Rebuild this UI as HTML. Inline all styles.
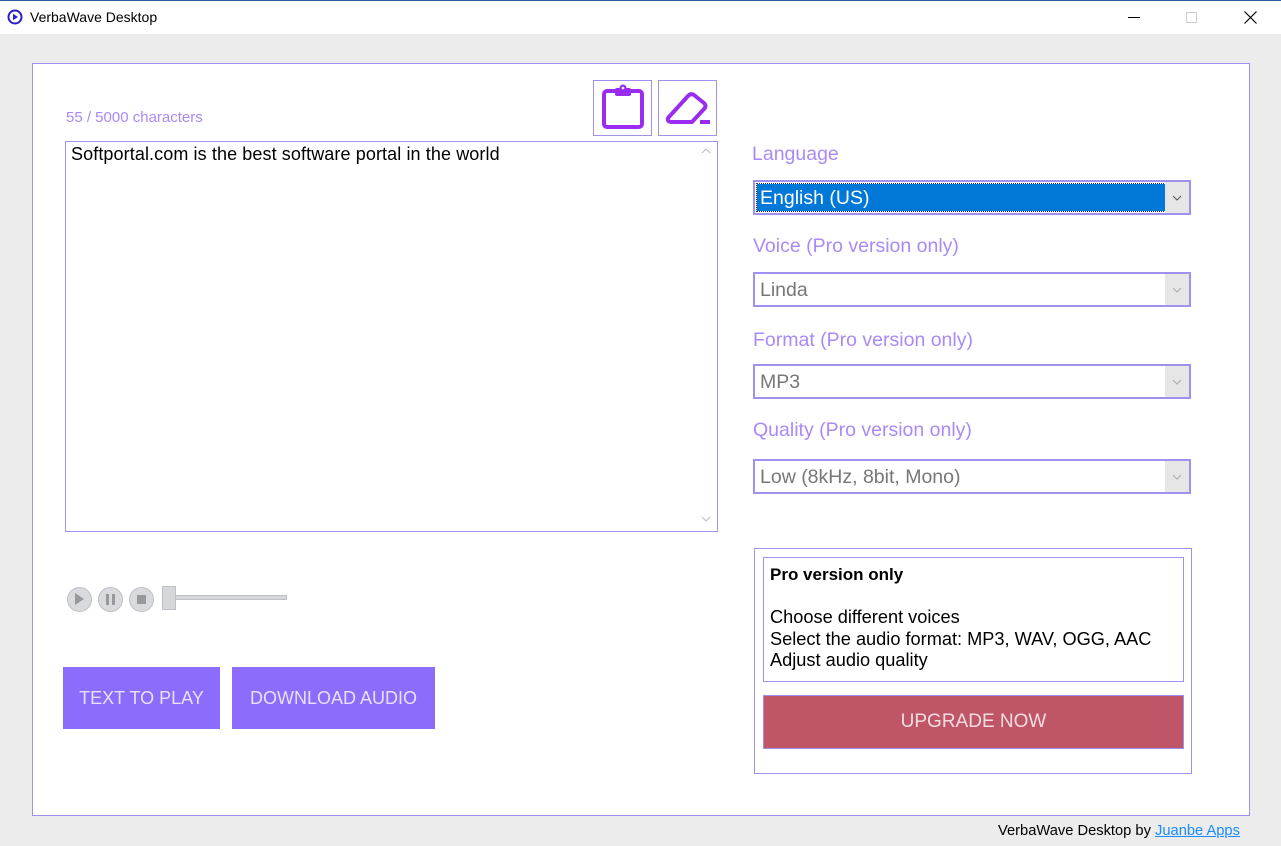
<!DOCTYPE html>
<html><head><style>
*{margin:0;padding:0;box-sizing:border-box}
body{width:1281px;height:846px;background:#ececec;font-family:"Liberation Sans",sans-serif;position:relative;overflow:hidden}
.a{position:absolute}
.lbl{color:#a98af6;font-size:19.5px}
.sel{position:absolute;left:753px;width:438px;height:35px;border:2px solid #a090f0;background:#fff;font-size:19.5px}
.sel .t{position:absolute;left:5px;top:5px;color:#777}
.sel .dd{position:absolute;right:0;top:0;width:24px;height:31px;background:#e6e6e6}
.btn{position:absolute;background:#8b6cfb;color:#e8e0ff;font-size:18px;text-align:center;line-height:62px;top:667px;height:62px}
.circ{position:absolute;top:587px;width:25px;height:25px;border-radius:50%;background:#d9dadd;border:1px solid #bfc1c5}
</style></head><body>
<div class="a" style="left:0;top:0;width:1281px;height:34px;background:#fff;border-top:1px solid #2b5aa0"></div>
<svg class="a" style="left:7px;top:9px" width="16" height="16"><circle cx="8" cy="8" r="6.5" fill="none" stroke="#2a1fd0" stroke-width="2"/><path d="M6 4.8 L11 8 L6 11.2Z" fill="#2a1fd0"/></svg>
<div class="a" style="left:30px;top:9px;font-size:14px;color:#000">VerbaWave Desktop</div>
<div class="a" style="left:1128px;top:17px;width:12px;height:1px;background:#000"></div>
<div class="a" style="left:1186px;top:12px;width:11px;height:11px;border:1px solid #ccc"></div>
<svg class="a" style="left:1244px;top:11px" width="13" height="13"><path d="M0.5 0.5L12.5 12.5M12.5 0.5L0.5 12.5" stroke="#000" stroke-width="1.2"/></svg>
<div class="a" style="left:32px;top:63px;width:1218px;height:753px;background:#fff;border:1px solid #a090f0"></div>
<div class="a" style="left:66px;top:109px;font-size:15px;color:#a98af6">55 / 5000 characters</div>
<div class="a" style="left:593px;top:80px;width:59px;height:56px;border:1px solid #a090f0"></div>
<svg class="a" style="left:593px;top:80px" width="59" height="56"><rect x="11" y="11" width="38" height="36" rx="3" fill="none" stroke="#9a2cf0" stroke-width="4"/><rect x="22" y="8" width="16" height="8" rx="2" fill="#9a2cf0"/><circle cx="30" cy="8" r="3.5" fill="#9a2cf0"/><circle cx="30" cy="8" r="1.3" fill="#fff"/></svg>
<div class="a" style="left:658px;top:80px;width:59px;height:56px;border:1px solid #a090f0"></div>
<svg class="a" style="left:658px;top:80px" width="59" height="56"><path d="M10 38 L30 16 Q33 13 36 15 L46 23 Q49 26 46 29 L34 42 L14 42 Q9 42 10 38Z" fill="none" stroke="#9a2cf0" stroke-width="4" stroke-linejoin="round"/><path d="M42 42 L52 42" stroke="#9a2cf0" stroke-width="4"/></svg>
<div class="a" style="left:65px;top:141px;width:653px;height:391px;border:1px solid #a090f0;background:#fff"></div>
<div class="a" style="left:71px;top:144px;font-size:18px;color:#000;letter-spacing:0.1px">Softportal.com is the best software portal in the world</div>
<svg class="a" style="left:701px;top:148px" width="10" height="6"><path d="M1 5L5 1L9 5" fill="none" stroke="#bbb"/></svg>
<svg class="a" style="left:701px;top:516px" width="10" height="6"><path d="M1 1L5 5L9 1" fill="none" stroke="#bbb"/></svg>
<div class="circ" style="left:67px"></div><div class="a" style="left:75px;top:593px;width:0;height:0;border-left:9px solid #999;border-top:6px solid transparent;border-bottom:6px solid transparent"></div>
<div class="circ" style="left:98px"></div><div class="a" style="left:106px;top:594px;width:3px;height:11px;background:#999"></div><div class="a" style="left:112px;top:594px;width:3px;height:11px;background:#999"></div>
<div class="circ" style="left:129px"></div><div class="a" style="left:137px;top:595px;width:9px;height:9px;background:#999"></div>
<div class="a" style="left:170px;top:595px;width:117px;height:5px;background:#d6d7da;border:1px solid #bfc1c5"></div>
<div class="a" style="left:162px;top:586px;width:14px;height:24px;background:#d6d7da;border:1px solid #bfc1c5"></div>
<div class="btn" style="left:63px;width:157px">TEXT TO PLAY</div>
<div class="btn" style="left:232px;width:203px">DOWNLOAD AUDIO</div>
<div class="a lbl" style="left:752px;top:143px">Language</div>
<div class="sel" style="top:180px"><div class="a" style="left:2px;top:2px;width:408px;height:27px;background:#0078d7;outline:1px dotted #333"></div><div class="t" style="color:#fff;top:5px">English (US)</div><div class="dd"><svg width="24" height="31"><path d="M8 14L12 18L16 14" fill="none" stroke="#555"/></svg></div></div>
<div class="a lbl" style="left:753px;top:235px">Voice (Pro version only)</div>
<div class="sel" style="top:272px"><div class="t">Linda</div><div class="dd"><svg width="24" height="31"><path d="M8 14L12 18L16 14" fill="none" stroke="#aaa"/></svg></div></div>
<div class="a lbl" style="left:753px;top:329px">Format (Pro version only)</div>
<div class="sel" style="top:364px"><div class="t">MP3</div><div class="dd"><svg width="24" height="31"><path d="M8 14L12 18L16 14" fill="none" stroke="#aaa"/></svg></div></div>
<div class="a lbl" style="left:753px;top:419px">Quality (Pro version only)</div>
<div class="sel" style="top:459px"><div class="t">Low (8kHz, 8bit, Mono)</div><div class="dd"><svg width="24" height="31"><path d="M8 14L12 18L16 14" fill="none" stroke="#aaa"/></svg></div></div>
<div class="a" style="left:754px;top:548px;width:438px;height:226px;border:1px solid #a090f0"></div>
<div class="a" style="left:763px;top:557px;width:421px;height:125px;border:1px solid #a090f0;font-size:18.2px;color:#000;padding:6px 0 0 6px;line-height:21.5px"><b style="font-size:17px">Pro version only</b><br><br>Choose different voices<br>Select the audio format: MP3, WAV, OGG, AAC<br>Adjust audio quality</div>
<div class="a" style="left:763px;top:695px;width:421px;height:54px;background:#bf5667;border:1px solid #a090f0;color:#f4dde2;font-size:19px;text-align:center;line-height:52px">UPGRADE NOW</div>
<div class="a" style="left:998px;top:823px;font-size:14.7px;color:#000">VerbaWave Desktop by <span style="color:#1a8cff;text-decoration:underline">Juanbe Apps</span></div>
</body></html>
